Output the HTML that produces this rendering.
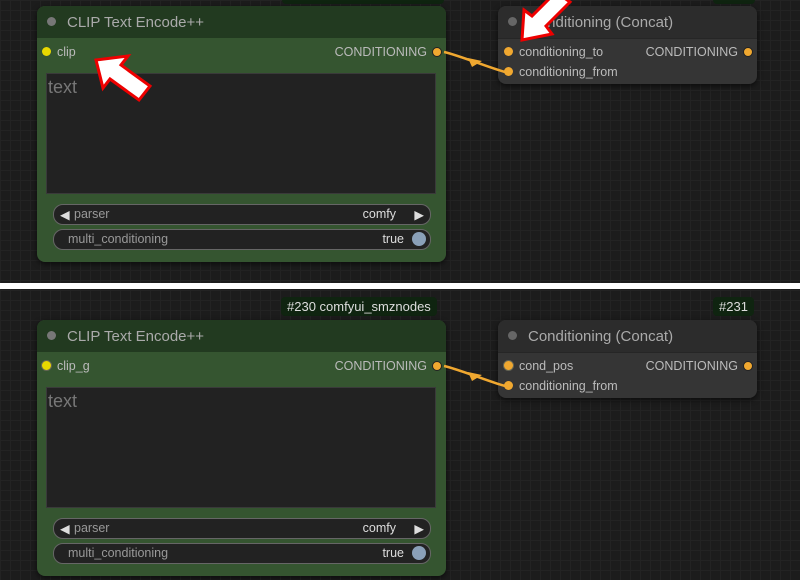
<!DOCTYPE html>
<html><head><meta charset="utf-8"><style>
body{margin:0;width:800px;height:580px;overflow:hidden;background:#1c1c1c;font-family:"Liberation Sans",sans-serif;position:relative;
background-image:linear-gradient(#232323 1px,transparent 1px),linear-gradient(90deg,#232323 1px,transparent 1px);background-size:10px 10px;}
.a{position:absolute}
.node{position:absolute;border-radius:8px;box-shadow:0 2px 6px rgba(0,0,0,.6)}
.g{background:#355530}
.gt{background:#223a20;border-radius:8px 8px 0 0;height:32px}
.d{background:#353535}
.dt{background:#2c2c2c;border-radius:8px 8px 0 0;height:32px;border-bottom:1px solid #262626}
.title{position:absolute;top:8px;left:30px;font-size:15px;color:#aaa}
.dot{position:absolute;width:9px;height:9px;border-radius:50%}
.t{position:absolute;font-size:12.5px;color:#bbb}
.ta{position:absolute;background:#222;border:1px solid #3a3a3a}
.w{position:absolute;height:19px;border-radius:10px;background:#222;border:1px solid #666;font-size:12.5px;color:#999}
.badge{position:absolute;background:#0f2410;color:#ddd;font-size:13px;border-radius:4px;padding:2px 6px}
</style></head><body>
<div class="badge" style="left:282px;top:-18px;width:150px;height:18px"></div>
<div class="badge" style="left:713px;top:-18px;width:30px;height:18px"></div>

<!-- TOP -->
<div class="node g" style="left:37px;top:6px;width:409px;height:256px">
 <div class="gt"></div>
 <div class="dot" style="left:10px;top:11px;background:#777"></div>
 <div class="title">CLIP Text Encode++</div>
 <div class="dot" style="left:5px;top:41px;background:#e8d800"></div>
 <div class="t" style="left:20px;top:39px">clip</div>
 <div class="t" style="right:19px;top:39px">CONDITIONING</div>
 <div class="dot" style="right:4px;top:41px;background:#f0a830;border:1px solid #222;width:8px;height:8px"></div>
 <div class="ta" style="left:9px;top:67px;width:388px;height:119px"><span style="position:absolute;left:1px;top:3px;font-size:18px;color:#777">text</span></div>
 <div class="w" style="left:16px;top:198px;width:376px"><span class="a" style="left:6px;top:2px;color:#ddd">◀</span><span class="a" style="left:20px;top:2px">parser</span><span class="a" style="right:34px;top:2px;color:#ddd">comfy</span><span class="a" style="right:6px;top:2px;color:#ddd">▶</span></div>
 <div class="w" style="left:16px;top:223px;width:376px"><span class="a" style="left:14px;top:2px">multi_conditioning</span><span class="a" style="right:26px;top:2px;color:#ddd">true</span><span class="a" style="right:4px;top:2px;width:14px;height:14px;border-radius:50%;background:#8aa0b8"></span></div>
</div>
<div class="node d" style="left:498px;top:6px;width:259px;height:78px">
 <div class="dt"></div>
 <div class="dot" style="left:10px;top:11px;background:#666"></div>
 <div class="title">Conditioning (Concat)</div>
 <div class="dot" style="left:6px;top:41px;background:#f0a830"></div>
 <div class="t" style="left:21px;top:39px">conditioning_to</div>
 <div class="t" style="right:19px;top:39px">CONDITIONING</div>
 <div class="dot" style="right:4px;top:41px;background:#f0a830;width:8px;height:8px;border:1px solid #222"></div>
 <div class="dot" style="left:6px;top:61px;background:#f0a830"></div>
 <div class="t" style="left:21px;top:59px">conditioning_from</div>
</div>

<div class="a" style="left:0;top:283px;width:800px;height:6px;background:#fff"></div>

<!-- BOTTOM -->
<div class="badge" style="left:281px;top:297px">#230 comfyui_smznodes</div>
<div class="badge" style="left:713px;top:297px">#231</div>
<div class="node g" style="left:37px;top:320px;width:409px;height:256px">
 <div class="gt"></div>
 <div class="dot" style="left:10px;top:11px;background:#777"></div>
 <div class="title">CLIP Text Encode++</div>
 <div class="dot" style="left:4px;top:40px;background:#e8d800;border:1px solid #665"></div>
 <div class="t" style="left:20px;top:39px">clip_g</div>
 <div class="t" style="right:19px;top:39px">CONDITIONING</div>
 <div class="dot" style="right:4px;top:41px;background:#f0a830;border:1px solid #222;width:8px;height:8px"></div>
 <div class="ta" style="left:9px;top:67px;width:388px;height:119px"><span style="position:absolute;left:1px;top:3px;font-size:18px;color:#777">text</span></div>
 <div class="w" style="left:16px;top:198px;width:376px"><span class="a" style="left:6px;top:2px;color:#ddd">◀</span><span class="a" style="left:20px;top:2px">parser</span><span class="a" style="right:34px;top:2px;color:#ddd">comfy</span><span class="a" style="right:6px;top:2px;color:#ddd">▶</span></div>
 <div class="w" style="left:16px;top:223px;width:376px"><span class="a" style="left:14px;top:2px">multi_conditioning</span><span class="a" style="right:26px;top:2px;color:#ddd">true</span><span class="a" style="right:4px;top:2px;width:14px;height:14px;border-radius:50%;background:#8aa0b8"></span></div>
</div>
<div class="node d" style="left:498px;top:320px;width:259px;height:78px">
 <div class="dt"></div>
 <div class="dot" style="left:10px;top:11px;background:#666"></div>
 <div class="title">Conditioning (Concat)</div>
 <div class="dot" style="left:5px;top:40px;background:#f0a830;border:1px solid #665"></div>
 <div class="t" style="left:21px;top:39px">cond_pos</div>
 <div class="t" style="right:19px;top:39px">CONDITIONING</div>
 <div class="dot" style="right:4px;top:41px;background:#f0a830;width:8px;height:8px;border:1px solid #222"></div>
 <div class="dot" style="left:6px;top:61px;background:#f0a830"></div>
 <div class="t" style="left:21px;top:59px">conditioning_from</div>
</div>

<svg class="a" style="left:0;top:0" width="800" height="580">
 <g fill="none" stroke="#f0a830" stroke-width="2.5">
  <path d="M444 52 C458 55 490 68 505 72"/>
  <path d="M444 366 C458 369 490 382 505 386"/>
 </g>
 <path d="M468 58 l14 3 -10 6z" fill="#f0a830"/>
 <path d="M468 372 l14 3 -10 6z" fill="#f0a830"/>
 <path d="M96 60 L128 56 L121 65 L150 86 L139 100 L110 79 L103 88 Z" fill="#fff" stroke="#e00" stroke-width="3" stroke-linejoin="miter"/>
 <path d="M522 40 L524 10 L532 16 L556 -8 L570 2 L546 26 L552 34 Z" fill="#fff" stroke="#e00" stroke-width="3"/>
</svg>
</body></html>
